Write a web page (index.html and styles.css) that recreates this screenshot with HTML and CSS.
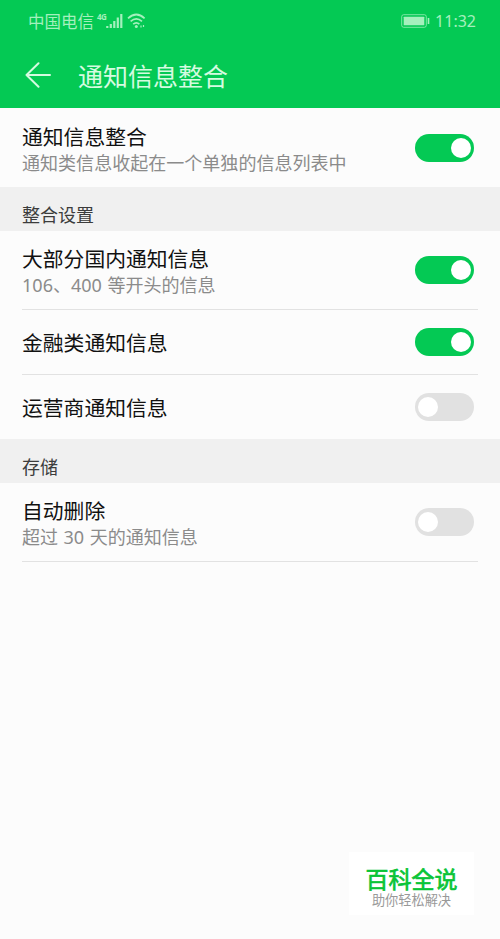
FILE: index.html
```html
<!DOCTYPE html>
<html lang="zh-CN">
<head>
<meta charset="utf-8">
<title>通知信息整合</title>
<link rel="stylesheet" href="styles.css">
</head>
<body>
<header class="header">
  <div class="status">
    <span class="carrier">中国电信</span>
    <span class="net">4G</span>
    <svg class="signal" width="17" height="16" viewBox="0 0 17 16"><path d="M1.3 13v2M4.8 11v4M8.3 8v7M11.8 4.5V15M15.3 1v14" stroke="currentColor" stroke-width="2.2"/></svg>
    <svg class="wifi" width="19" height="16" viewBox="0 0 19 16" fill="none" stroke="currentColor" stroke-width="1.7"><path d="M1 5.3Q9.3-2.3 17.6 5.3M3.6 8.3q5.7-5 11.4 0M6.2 11.1q3.1-2.6 6.2 0"/><circle cx="9.3" cy="13.6" r="1.5" fill="currentColor" stroke="none"/><path d="M14 12.5v2M16.5 12v2" stroke-width="1.2"/></svg>
    <svg class="battery" width="29" height="14" viewBox="0 0 29 14"><rect x=".7" y=".7" width="24.6" height="12.6" rx="2" fill="none" stroke="currentColor" stroke-width="1" opacity=".75"/><rect x="2.7" y="2.7" width="20.6" height="8.6" rx=".6" fill="currentColor"/><path d="M27.5 4v6" stroke="currentColor" stroke-width="1.6"/></svg>
    <span class="time">11:32</span>
  </div>
  <div class="bar">
    <svg class="back" width="26" height="26" viewBox="0 0 26 26" fill="none" stroke="currentColor" stroke-width="2" stroke-linecap="round" stroke-linejoin="round"><path d="M25 13H1.5M13.5 1.2L1.5 13l12 11.8"/></svg>
    <h1>通知信息整合</h1>
  </div>
</header>
<main>
  <div class="row tall">
    <div><p class="title">通知信息整合</p><p class="sub">通知类信息收起在一个单独的信息列表中</p></div>
    <span class="toggle on"></span>
  </div>
  <h2>整合设置</h2>
  <div class="row tall line">
    <div><p class="title">大部分国内通知信息</p><p class="sub">106、400 等开头的信息</p></div>
    <span class="toggle on"></span>
  </div>
  <div class="row line">
    <p class="title">金融类通知信息</p>
    <span class="toggle on"></span>
  </div>
  <div class="row short">
    <p class="title">运营商通知信息</p>
    <span class="toggle"></span>
  </div>
  <h2>存储</h2>
  <div class="row tall line">
    <div><p class="title">自动删除</p><p class="sub">超过 30 天的通知信息</p></div>
    <span class="toggle"></span>
  </div>
</main>
<aside class="mark">
  <strong>百科全说</strong>
  <span>助你轻松解决</span>
</aside>
</body>
</html>
```
FILE: styles.css
```css
* { box-sizing: border-box; margin: 0; padding: 0; }
body {
  height: 939px;
  overflow: hidden;
  position: relative;
  background: #fcfcfc;
  font-family: "Noto Sans", "Noto Sans CJK SC", sans-serif;
  color: #111;
}
.header {
  height: 108px;
  background: #04c954;
  color: #d5fbe0;
}
.status {
  height: 42px;
  padding: 0 24px 0 28px;
  display: flex;
  align-items: center;
  color: #a4f0bd;
  font-size: 16.5px;
}
.carrier { font-family: "Noto Sans CJK SC", sans-serif; }
.net { font-size: 8px; font-weight: 700; line-height: 8px; margin: -9px 0 0 3px; width: 9px; letter-spacing: -.5px; }
.wifi { margin-left: 4px; }
.battery { margin-left: auto; margin-right: 5px; }
.time { font-size: 16px; }
.bar { height: 66px; display: flex; align-items: center; padding-left: 25px; }
.back { display: block; }
h1 { margin-left: 27px; font: 400 25px/36px "Noto Sans CJK SC", sans-serif; }
.row {
  height: 65px;
  margin: 0 22px;
  padding-right: 4px;
  display: flex;
  align-items: center;
  justify-content: space-between;
}
.tall { height: 79px; }
.short { height: 64px; }
.line { border-bottom: 1px solid #e2e2e2; }
.title { font: 400 20.8px/28px "Noto Sans CJK SC", sans-serif; }
.sub { font-size: 18.05px; line-height: 24px; color: #8b8b8b; white-space: nowrap; word-spacing: .8px; position: relative; top: 1px; }
h2 {
  height: 44px;
  padding: 10px 22px 0;
  background: #f0f0f0;
  color: #3c3c3c;
  font: 400 18px/34px "Noto Sans CJK SC", sans-serif;
}
.toggle {
  width: 59px;
  height: 28px;
  padding: 4px 3px;
  border-radius: 14px;
  background: #e1e1e1;
  display: flex;
}
.toggle::before { content: ""; width: 20px; height: 20px; border-radius: 50%; background: #fff; }
.on { background: #04c954; justify-content: flex-end; }
.mark {
  position: absolute;
  left: 349px;
  top: 852px;
  width: 125px;
  height: 63px;
  padding-top: 14px;
  background: #fff;
  text-align: center;
  font-family: "Noto Sans CJK SC", sans-serif;
}
.mark strong { display: block; font-size: 23px; line-height: 24px; font-weight: 400; color: #09c437; -webkit-text-stroke: .7px #09c437; }
.mark span { display: block; font-size: 13.2px; line-height: 20px; color: #999; }
```
